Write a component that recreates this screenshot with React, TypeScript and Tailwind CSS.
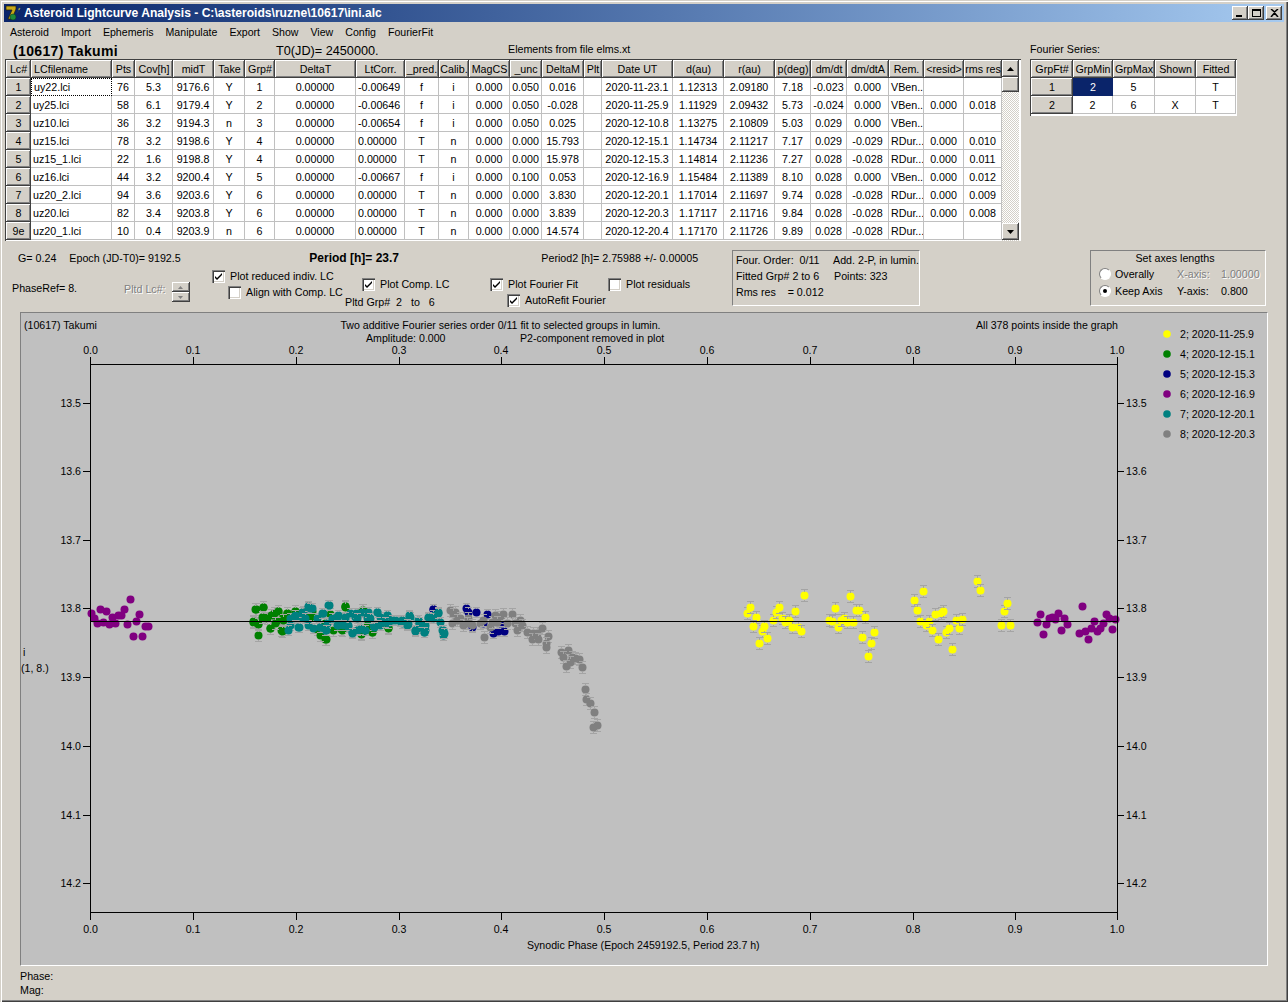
import React from "react";

const widths = "grid-cols-[25px_81px_23px_38px_41px_31px_30px_81px_49px_34px_30px_41px_32px_42px_18px_71px_51px_51px_36px_36px_42px_35px_40px_38px]";
const headers = ["Lc#","LCfilename","Pts","Cov[h]","midT","Take","Grp#","DeltaT","LtCorr.","_pred.","Calib.","MagCS","_unc","DeltaM","Plt","Date UT","d(au)","r(au)","p(deg)","dm/dt","dm/dtA","Rem.","<resid>","rms res"];
const rows: string[][] = [
["1","uy22.lci","76","5.3","9176.6","Y","1","0.00000","-0.00649","f","i","0.000","0.050","0.016","","2020-11-23.1","1.12313","2.09180","7.18","-0.023","0.000","VBen..","",""],
["2","uy25.lci","58","6.1","9179.4","Y","2","0.00000","-0.00646","f","i","0.000","0.050","-0.028","","2020-11-25.9","1.11929","2.09432","5.73","-0.024","0.000","VBen..","0.000","0.018"],
["3","uz10.lci","36","3.2","9194.3","n","3","0.00000","-0.00654","f","i","0.000","0.050","0.025","","2020-12-10.8","1.13275","2.10809","5.03","0.029","0.000","VBen..","",""],
["4","uz15.lci","78","3.2","9198.6","Y","4","0.00000","0.00000","T","n","0.000","0.000","15.793","","2020-12-15.1","1.14734","2.11217","7.17","0.029","-0.029","RDur...","0.000","0.010"],
["5","uz15_1.lci","22","1.6","9198.8","Y","4","0.00000","0.00000","T","n","0.000","0.000","15.978","","2020-12-15.3","1.14814","2.11236","7.27","0.028","-0.028","RDur...","0.000","0.011"],
["6","uz16.lci","44","3.2","9200.4","Y","5","0.00000","-0.00667","f","i","0.000","0.100","0.053","","2020-12-16.9","1.15484","2.11389","8.10","0.028","0.000","VBen..","0.000","0.012"],
["7","uz20_2.lci","94","3.6","9203.6","Y","6","0.00000","0.00000","T","n","0.000","0.000","3.830","","2020-12-20.1","1.17014","2.11697","9.74","0.028","-0.028","RDur...","0.000","0.009"],
["8","uz20.lci","82","3.4","9203.8","Y","6","0.00000","0.00000","T","n","0.000","0.000","3.839","","2020-12-20.3","1.17117","2.11716","9.84","0.028","-0.028","RDur...","0.000","0.008"],
["9e","uz20_1.lci","10","0.4","9203.9","n","6","0.00000","0.00000","T","n","0.000","0.000","14.574","","2020-12-20.4","1.17170","2.11726","9.89","0.028","-0.028","RDur...","",""],
];
const bevel = "bg-[#d4d0c8] shadow-[inset_-1px_-1px_0_#404040,inset_1px_1px_0_#ffffff,inset_-2px_-2px_0_#808080]";

type P = [number, number];
const snap = (v: number) => Math.round(v) + 0.5;
const conv = (ox: number, oy: number) => (a: P[]): P[] => a.map(([x, y]) => [snap(ox + x / 3), snap(oy + y / 3)]);
const z3 = conv(240, 595);
const z4 = conv(345, 595);
const z5 = conv(70, 570);
const z6 = conv(400, 590);
const z7 = conv(730, 560);

const yellow = z7([[52,160],[61,142],[79,172],[70,199],[97,214],[103,199],[88,250],[112,235],[130,179],[139,155],[148,142],[157,175],[166,187],[178,181],[187,202],[196,154],[205,202],[214,214],[223,106],[298,181],[307,184],[316,145],[325,202],[334,181],[343,175],[352,187],[361,109],[370,187],[379,149],[388,151],[397,232],[406,172],[415,289],[424,250],[433,217],[553,121],[562,149],[571,184],[580,94],[589,196],[598,184],[607,211],[616,163],[625,238],[632,160],[640,154],[649,217],[658,205],[667,268],[679,181],[688,205],[697,178],[742,64],[751,91],[814,196],[823,154],[832,130],[841,196]]);
const green = [...z5([[548,155],[557,118],[580,112],[565,160],[565,196],[578,138],[590,145],[600,175],[604,135],[612,130],[625,123],[634,181],[625,150],[640,140],[650,130],[676,124],[700,127],[727,124],[740,178],[767,208],[780,132],[790,180],[826,109],[812,178],[878,120],[874,190],[905,187],[892,165],[955,172],[720,140],[766,160]]),
  ...z3([[45,43],[70,37],[40,78],[55,88],[65,65],[90,100],[95,60],[115,48],[125,108],[140,55],[165,48],[105,85],[130,75],[315,33],[256,133],[195,60],[240,120],[305,105]]),
  ...z4([[0,35],[50,45],[128,98],[80,112],[48,118],[68,88]])];
const navy = [...z6([[100,58],[197,55],[205,65],[227,67],[260,72],[250,100],[215,110],[303,100],[312,122],[295,122],[278,128]]), ...z4([[265,42]])];
const purple = [...z5([[64,130],[72,145],[82,160],[91,118],[100,155],[109,124],[118,163],[127,140],[136,160],[145,136],[154,136],[163,118],[172,163],[181,88],[190,199],[199,154],[208,133],[217,199],[226,169],[235,169]]),
  ...z7([[922,187],[931,163],[940,223],[949,193],[958,175],[967,172],[976,178],[985,160],[994,211],[1003,175],[1012,193],[1048,220],[1057,139],[1066,214],[1075,238],[1084,205],[1093,184],[1102,214],[1110,205],[1120,190],[1129,163],[1138,175],[1147,208],[1156,178]])];
const teal = [...z3([[205,35],[215,40],[265,30],[165,70],[190,50],[185,65],[150,90],[175,95],[205,90],[230,70],[245,55],[240,95],[255,105],[260,85],[290,65],[295,90],[315,70],[325,95],[280,70],[220,100]]),
  ...z4([[15,55],[30,65],[20,112],[50,50],[65,70],[95,50],[105,65],[125,60],[150,75],[130,85],[170,85],[195,65],[190,88],[215,100],[220,75],[240,105],[250,70],[265,60],[280,50],[295,105],[295,120],[45,95],[60,105],[85,90],[105,90],[35,105],[10,90]]),
  ...z5([[655,180],[660,145],[675,135],[686,170],[695,125],[705,145],[713,108],[720,115],[750,170],[760,130],[767,181],[776,106],[785,145],[803,135],[800,165],[825,140],[820,165],[845,190],[857,130],[860,145],[870,178],[885,180],[895,125],[900,145],[920,125],[912,170],[950,135],[945,155],[965,150],[990,152],[1018,135],[1010,165],[1035,183],[1048,155],[1062,185],[1045,170]]),
  ...z6([[5,90],[28,78],[20,102],[58,95],[75,105],[45,120],[72,125],[85,80],[100,85],[115,68],[120,95],[125,120],[132,130]])];
const gray = z6([[150,60],[165,65],[158,72],[155,100],[180,85],[170,90],[190,105],[205,85],[200,100],[215,105],[240,100],[253,142],[250,90],[270,110],[275,95],[285,75],[300,80],[310,72],[335,72],[290,95],[320,100],[345,100],[360,90],[350,120],[365,105],[380,125],[400,130],[395,148],[410,130],[427,115],[445,137],[415,148],[437,160],[437,172],[483,185],[503,180],[490,202],[515,200],[525,205],[537,208],[510,215],[497,227],[545,230],[556,297],[558,328],[570,338],[583,367],[590,405],[580,410]]);
const series: [P[], string, number][] = [[yellow,"#ffff00",6],[green,"#008000",6],[navy,"#000080",5],[purple,"#800080",0],[teal,"#008080",5],[gray,"#808080",6]];
const legend: [string,string][] = [["#ffff00","2; 2020-11-25.9"],["#008000","4; 2020-12-15.1"],["#000080","5; 2020-12-15.3"],["#800080","6; 2020-12-16.9"],["#008080","7; 2020-12-20.1"],["#808080","8; 2020-12-20.3"]];
const xt = [90.5,193,296,399,501,604,707,810,913,1015,1117];
const yt: [number,string][] = [[403,"13.5"],[471,"13.6"],[540,"13.7"],[608,"13.8"],[677,"13.9"],[746,"14.0"],[815,"14.1"],[883,"14.2"]];

function Check({ label, on, className }: { label: string; on: boolean; className?: string }) {
  return (
    <div className={"flex items-center gap-[5px] h-[16px] whitespace-nowrap " + (className ?? "")}>
      <span className="w-[13px] h-[13px] shrink-0 bg-white shadow-[inset_1px_1px_0_#808080,inset_2px_2px_0_#404040,inset_-1px_-1px_0_#ffffff,inset_-2px_-2px_0_#d4d0c8] flex items-center justify-center">
        {on && (
          <svg width="9" height="9" viewBox="0 0 9 9"><path d="M1 4l2 2 5-5v2L3 8 1 6z" fill="#000" /></svg>
        )}
      </span>
      <span>{label}</span>
    </div>
  );
}

function Radio({ on, label }: { on: boolean; label: string }) {
  return (
    <div className="flex items-center gap-[4px] h-[17px]">
      <span className="w-[12px] h-[12px] rounded-full bg-white border border-[#808080] border-r-white border-b-white flex items-center justify-center">
        {on && <span className="w-[4px] h-[4px] rounded-full bg-black" />}
      </span>
      <span>{label}</span>
    </div>
  );
}

function WinBtn({ children }: { children: React.ReactNode }) {
  return <div className={"w-[16px] h-[14px] flex items-center justify-center " + bevel}>{children}</div>;
}

export default function App() {
  return (
    <div className="w-[1288px] h-[1002px] overflow-hidden bg-[#d4d0c8] text-black text-[10.7px] leading-[14px] font-['Liberation_Sans',Arial,sans-serif] shadow-[inset_1px_1px_0_#d4d0c8,inset_2px_2px_0_#ffffff,inset_-1px_-1px_0_#404040,inset_-2px_-2px_0_#808080] p-[4px] flex flex-col">
      {/* title bar */}
      <div className="h-[18px] shrink-0 flex items-center bg-gradient-to-r from-[#0a246a] to-[#a6caf0] pl-[1px] pr-[2px]">
        <svg width="17" height="17" viewBox="0 0 17 17" className="shrink-0">
          <path d="M1 1h10v3L7 14H3l4-9H1z" fill="#c8a818" stroke="#202008" strokeWidth="0.7" />
          <circle cx="8" cy="12" r="3" fill="#1e8a3c" stroke="#0a3a1a" strokeWidth="0.5" />
          <path d="M16 1l-3 3.5h1.5L11 9l4.5-5.5H14l2-2.5z" fill="#f8f040" />
        </svg>
        <span className="ml-[2px] font-bold text-[12.1px] text-white whitespace-nowrap">Asteroid Lightcurve Analysis - C:\asteroids\ruzne\10617\ini.alc</span>
        <div className="ml-auto flex items-center">
          <WinBtn><span className="w-[6px] h-[2px] bg-black mt-[6px] -ml-[2px]" /></WinBtn>
          <WinBtn><span className="w-[9px] h-[8px] border border-black border-t-2" /></WinBtn>
          <div className="w-[2px]" />
          <WinBtn>
            <svg width="9" height="8" viewBox="0 0 9 8"><path d="M1 0l3.5 3L8 0M1 8l3.5-4L8 8" stroke="#000" strokeWidth="1.5" fill="none" /></svg>
          </WinBtn>
        </div>
      </div>
      {/* menu */}
      <div className="h-[20px] shrink-0 flex items-center gap-[12px] pl-[6px] text-[10.6px]">
        {["Asteroid","Import","Ephemeris","Manipulate","Export","Show","View","Config","FourierFit"].map((m) => <span key={m}>{m}</span>)}
      </div>
      {/* heading row */}
      <div className="h-[17px] shrink-0 flex items-center">
        <span className="ml-[9px] w-[263px] font-bold text-[14px] tracking-[0.35px] whitespace-nowrap">(10617) Takumi</span>
        <span className="w-[232px] text-[12.7px] whitespace-nowrap">T0(JD)= 2450000.</span>
        <span className="w-[522px] -mt-[3px]">Elements from file elms.xt</span>
        <span className="-mt-[3px]">Fourier Series:</span>
      </div>
      {/* tables */}
      <div className="flex shrink-0 h-[182px]">
        <div className="ml-[1px] w-[1016px] shrink-0 flex bg-white p-[1px] pr-0 pb-0 shadow-[inset_1px_1px_0_#404040,inset_-1px_-1px_0_#ffffff]">
          <div className={"grid auto-rows-[18px] text-center " + widths}>
            {headers.map((h, i) => (
              <div key={h} className={"flex items-center whitespace-nowrap overflow-hidden " + (i === 1 ? "justify-start pl-[3px] " : "justify-center ") + bevel}>{h}</div>
            ))}
            {rows.map((r) =>
              r.map((c, i) => {
                if (i === 0) return <div key={i} className={"flex items-center justify-center " + bevel}>{c}</div>;
                const focus = c === "uy22.lci";
                const left = i === 1 || i === 8 || i === 21;
                return (
                  <div key={i} className={"flex items-center whitespace-nowrap overflow-hidden border-r border-b border-[#c0c0c0] " + (left ? "justify-start pl-[2px] " : "justify-center ") + (focus ? "border border-dotted border-black " : "")}>{c}</div>
                );
              })
            )}
          </div>
          <div className="w-[17px] shrink-0 flex flex-col bg-[repeating-conic-gradient(#ffffff_0_25%,#d4d0c8_0_50%)] bg-[length:2px_2px]">
            <div className={"h-[17px] flex items-center justify-center " + bevel}>
              <svg width="7" height="4" viewBox="0 0 7 4"><path d="M3.5 0L7 4H0z" fill="#000" /></svg>
            </div>
            <div className={"h-[15px] " + bevel} />
            <div className="flex-1" />
            <div className={"h-[17px] flex items-center justify-center mb-[1px] " + bevel}>
              <svg width="7" height="4" viewBox="0 0 7 4"><path d="M0 0h7L3.5 4z" fill="#000" /></svg>
            </div>
          </div>
        </div>
        <div className="ml-[9px] h-[57px] bg-white p-[1px] shadow-[inset_1px_1px_0_#404040,inset_-1px_-1px_0_#ffffff]">
          <div className="grid grid-cols-[42px_40px_42px_41px_40px] auto-rows-[18px] text-center">
            {["GrpFt#","GrpMin","GrpMax","Shown","Fitted"].map((h) => (
              <div key={h} className={"flex items-center justify-center whitespace-nowrap overflow-hidden " + bevel}>{h}</div>
            ))}
            <div className={"flex items-center justify-center " + bevel}>1</div>
            <div className="flex items-center justify-center bg-[#0a246a] text-white">2</div>
            <div className="flex items-center justify-center border-r border-b border-[#c0c0c0]">5</div>
            <div className="flex items-center justify-center border-r border-b border-[#c0c0c0]"></div>
            <div className="flex items-center justify-center border-r border-b border-[#c0c0c0]">T</div>
            <div className={"flex items-center justify-center " + bevel}>2</div>
            <div className="flex items-center justify-center border-r border-b border-[#c0c0c0]">2</div>
            <div className="flex items-center justify-center border-r border-b border-[#c0c0c0]">6</div>
            <div className="flex items-center justify-center border-r border-b border-[#c0c0c0]">X</div>
            <div className="flex items-center justify-center border-r border-b border-[#c0c0c0]">T</div>
          </div>
        </div>
      </div>
      {/* controls */}
      <div className="h-[71px] shrink-0 flex pt-[9px]">
        <div className="w-[728px] shrink-0 flex flex-col">
          <div className="h-[14px] mt-[1px] flex items-center whitespace-nowrap">
            <span className="ml-[14px]">G= 0.24</span>
            <span className="ml-[13px] w-[240px]">Epoch (JD-T0)= 9192.5</span>
            <span className="font-bold text-[12px] w-[232px]">Period [h]= 23.7</span>
            <span>Period2 [h]= 2.75988 +/- 0.00005</span>
          </div>
          <div className="flex mt-[3px]">
            <div className="w-[120px] shrink-0 pl-[8px] pt-[13px]">PhaseRef= 8.</div>
            <div className="w-[88px] shrink-0 flex items-start pt-[14px]">
              <span className="text-[#808080] [text-shadow:1px_1px_0_#ffffff] whitespace-nowrap">Pltd Lc#:</span>
              <div className="ml-[6px] w-[18px] h-[20px] flex flex-col">
                <div className={"h-[10px] flex items-center justify-center " + bevel}><svg width="5" height="3" viewBox="0 0 5 3"><path d="M2.5 0L5 3H0z" fill="#808080" /></svg></div>
                <div className={"h-[10px] flex items-center justify-center " + bevel}><svg width="5" height="3" viewBox="0 0 5 3"><path d="M0 0h5L2.5 3z" fill="#808080" /></svg></div>
              </div>
            </div>
            <div className="w-[150px] shrink-0 flex flex-col">
              <Check on label="Plot reduced indiv. LC" />
              <Check on={false} label="Align with Comp. LC" className="ml-[16px]" />
            </div>
            <div className="w-[128px] shrink-0 flex flex-col pt-[8px]">
              <Check on label="Plot Comp. LC" />
              <div className="-ml-[17px] mt-[3px] whitespace-nowrap">Pltd Grp#&nbsp; 2&nbsp;&nbsp; to&nbsp;&nbsp; 6</div>
            </div>
            <div className="w-[118px] shrink-0 flex flex-col pt-[8px]">
              <Check on label="Plot Fourier Fit" />
              <Check on label="AutoRefit Fourier" className="ml-[17px]" />
            </div>
            <div className="pt-[8px]">
              <Check on={false} label="Plot residuals" />
            </div>
          </div>
        </div>
        <div className="w-[188px] h-[56px] shrink-0 border border-[#808080] border-r-white border-b-white pl-[3px] pt-[1px] flex flex-col">
          <div className="h-[16px] flex items-center whitespace-nowrap"><span className="w-[98px]">Four. Order:&nbsp; 0/11</span><span>Add. 2-P, in lumin.</span></div>
          <div className="h-[16px] flex items-center whitespace-nowrap"><span className="w-[98px]">Fitted Grp# 2 to 6</span><span>Points: 323</span></div>
          <div className="h-[16px] flex items-center whitespace-nowrap"><span>Rms res&nbsp;&nbsp;&nbsp; = 0.012</span></div>
        </div>
        <div className="ml-[170px] w-[176px] h-[56px] shrink-0 border border-[#808080] border-r-white border-b-white pl-[8px] flex flex-col">
          <div className="h-[14px] flex items-center justify-center pr-[14px]">Set axes lengths</div>
          <div className="flex items-center h-[17px]">
            <div className="w-[78px]"><Radio on={false} label="Overally" /></div>
            <span className="w-[44px] text-[#808080] [text-shadow:1px_1px_0_#ffffff]">X-axis:</span>
            <span className="text-[#808080] [text-shadow:1px_1px_0_#ffffff]">1.00000</span>
          </div>
          <div className="flex items-center h-[17px]">
            <div className="w-[78px]"><Radio on label="Keep Axis" /></div>
            <span className="w-[44px]">Y-axis:</span>
            <span>0.800</span>
          </div>
        </div>
      </div>
      {/* plot */}
      <div className="ml-[16px] w-[1248px] h-[654px] shrink-0 bg-[#c0c0c0] border border-[#808080] border-r-white border-b-white">
        <svg viewBox="21 313 1246 652" width="1246" height="652" className="block" fontFamily="'Liberation Sans', Arial, sans-serif" fontSize="10.6" fill="#000">
          <text x="24" y="329">(10617) Takumi</text>
          <text x="500.5" y="329" textAnchor="middle">Two additive Fourier series order 0/11 fit to selected groups in lumin.</text>
          <text x="366" y="342">Amplitude: 0.000</text>
          <text x="520" y="342">P2-component removed in plot</text>
          <text x="976" y="329">All 378 points inside the graph</text>
          {xt.map((x, i) => (
            <g key={i}>
              <text x={x} y="354" textAnchor="middle">{(i / 10).toFixed(1)}</text>
              <text x={x} y="933" textAnchor="middle">{(i / 10).toFixed(1)}</text>
              <path d={`M${x} 357V364M${x} 912V920`} stroke="#000" shapeRendering="crispEdges" />
            </g>
          ))}
          {yt.map(([y, l]) => (
            <g key={l}>
              <text x="81" y={y + 4} textAnchor="end">{l}</text>
              <text x="1126" y={y + 4}>{l}</text>
              <path d={`M83 ${y}H90M1117 ${y}H1124`} stroke="#000" shapeRendering="crispEdges" />
            </g>
          ))}
          <text x="23" y="656">i</text>
          <text x="21" y="672">(1, 8.)</text>
          <text x="527" y="949">Synodic Phase (Epoch 2459192.5, Period 23.7 h)</text>
          {series.map(([pts, col, e], s) => (
            <g key={s}>
              {pts.map(([x, y], i) => (
                <g key={i}>
                  <circle cx={x} cy={y} r="4" fill={col} />
                  {e > 0 && (
                    <path d={`M${x} ${y - e}V${y - 4}M${x} ${y + 4}V${y + e}M${x - 3.5} ${y - e}h7M${x - 3.5} ${y + e}h7`} stroke="#a4a4a4" fill="none" shapeRendering="crispEdges" />
                  )}
                </g>
              ))}
            </g>
          ))}
          <rect x="90.5" y="364.5" width="1026.5" height="548" fill="none" stroke="#000" shapeRendering="crispEdges" />
          <path d="M90 621H1117" stroke="#000" shapeRendering="crispEdges" />
          {legend.map(([c, t], i) => (
            <g key={t}>
              <circle cx="1167" cy={334 + i * 20} r="3.8" fill={c} />
              <text x="1180" y={338 + i * 20}>{t}</text>
            </g>
          ))}
        </svg>
      </div>
      {/* footer */}
      <div className="ml-[16px] pt-[3px] flex flex-col leading-[14px]">
        <span>Phase:</span>
        <span>Mag:</span>
      </div>
    </div>
  );
}
